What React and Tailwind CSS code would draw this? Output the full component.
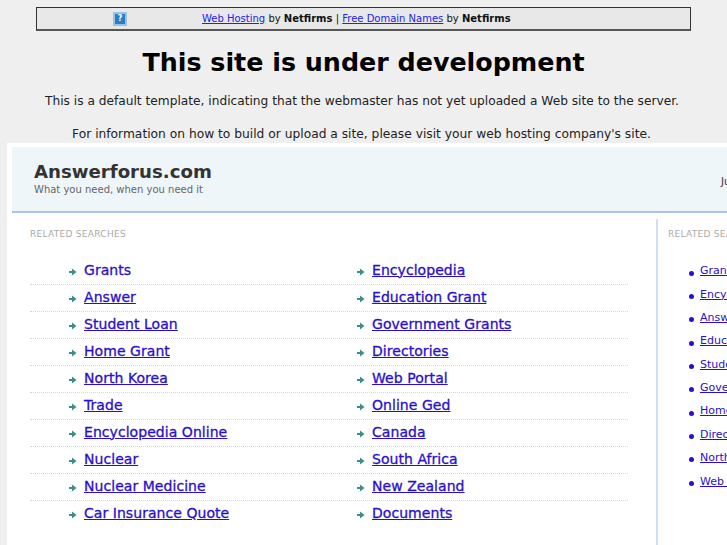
const left = [
  ["Grants", "Encyclopedia"],
  ["Answer", "Education Grant"],
  ["Student Loan", "Government Grants"],
  ["Home Grant", "Directories"],
  ["North Korea", "Web Portal"],
  ["Trade", "Online Ged"],
  ["Encyclopedia Online", "Canada"],
  ["Nuclear", "South Africa"],
  ["Nuclear Medicine", "New Zealand"],
  ["Car Insurance Quote", "Documents"],
];
const right = ["Grants", "Encyclopedia", "Answer", "Education Grant", "Student Loan", "Government Grants", "Home Grant", "Directories", "North Korea", "Web Portal"];

function Arrow() {
  return (
    <svg width="8" height="8" viewBox="0 0 8 8" className="shrink-0 mt-[3px]">
      <path d="M0 3H3V0.5L7.5 4L3 7.5V5H0Z" fill="#3a8f8a" />
    </svg>
  );
}

function Cell({ label, first }) {
  return (
    <div className="flex items-center w-[288px] pl-[39px] h-[26px] pb-[2px]">
      <Arrow />
      <a href="#" className={`ml-[7px] text-[14px] tracking-[0.05px] text-[#2a10cc] [-webkit-text-stroke:0.3px_#2a10cc] ${first ? "no-underline" : "underline"}`}>{label}</a>
    </div>
  );
}

export default function App() {
  return (
    <div className="w-[727px] h-[545px] overflow-hidden bg-[#efefef] text-[#222] font-['DejaVu_Sans',sans-serif]">
      <div className="pt-[7px] pl-[36px]">
        <div className="w-[655px] h-[24px] border border-[#333] border-b-2 border-b-[#555] bg-[#e8e8e8] flex items-center text-[10px] text-[#111]">
          <span className="ml-[76px] w-[14px] h-[14px] bg-[#2a7cc4] border-2 border-[#9cc0e0] flex items-center justify-center text-white text-[8px] font-bold leading-none">?</span>
          <span className="ml-[75px]">
            <a href="#" className="text-[#2222ee] underline">Web Hosting</a> by <b>Netfirms</b> | <a href="#" className="text-[#2222ee] underline">Free Domain Names</a> by <b>Netfirms</b>
          </span>
        </div>
      </div>
      <h1 className="mt-[14px] text-center text-[25.35px] leading-[34px] font-bold text-black">This site is under development</h1>
      <p className="mt-[14px] pr-[3px] text-center text-[12.2px] leading-[17px] text-[#222]">This is a default template, indicating that the webmaster has not yet uploaded a Web site to the server.</p>
      <p className="mt-[16px] pr-[4px] text-center text-[12.25px] leading-[17px] text-[#222]">For information on how to build or upload a site, please visit your web hosting company's site.</p>
      <div className="ml-[7px] w-[900px] h-[410px] bg-white pt-[4px] pl-[5px]">
        <div className="h-[66px] bg-[#eff6f9] border-b-2 border-[#a9c4e8] pl-[22px] pt-[14px] flex">
          <div className="w-[687px]">
            <div className="text-[18.15px] leading-[22px] font-bold text-[#333]">Answerforus.com</div>
            <div className="text-[10px] leading-[12px] pt-[1px] text-[#666]">What you need, when you need it</div>
          </div>
          <div className="text-[10px] pt-[13px] text-[#333]">June</div>
        </div>
        <div className="flex pt-[6px]">
          <div className="w-[644px] pl-[18px] pr-[28px] pt-[9px]">
            <div className="text-[9px] leading-[12px] tracking-[0.28px] text-[#aaa]">RELATED SEARCHES</div>
            <div className="mt-[18px]">
              {left.map(([a, b], i) => (
                <div key={a} className="flex w-[598px] h-[27px] border-b border-dotted border-[#ccd8f6] box-border last:border-b-0">
                  <Cell label={a} first={i === 0} />
                  <Cell label={b} />
                </div>
              ))}
            </div>
          </div>
          <div className="border-l-2 border-[#cfe0f5] pl-[10px] pt-[9px] h-[330px]">
            <div className="text-[9px] leading-[12px] tracking-[0.28px] text-[#aaa]">RELATED SEARCHES</div>
            <div className="mt-[20px] pl-[21px]">
              {right.map((r) => (
                <div key={r} className="flex items-center h-[23.35px]">
                  <span className="w-[5px] h-[5px] rounded-full bg-[#2a10cc] mt-[3px]"></span>
                  <a href="#" className="ml-[6px] text-[11px] text-[#2a10cc] underline">{r}</a>
                </div>
              ))}
            </div>
          </div>
        </div>
      </div>
    </div>
  );
}
